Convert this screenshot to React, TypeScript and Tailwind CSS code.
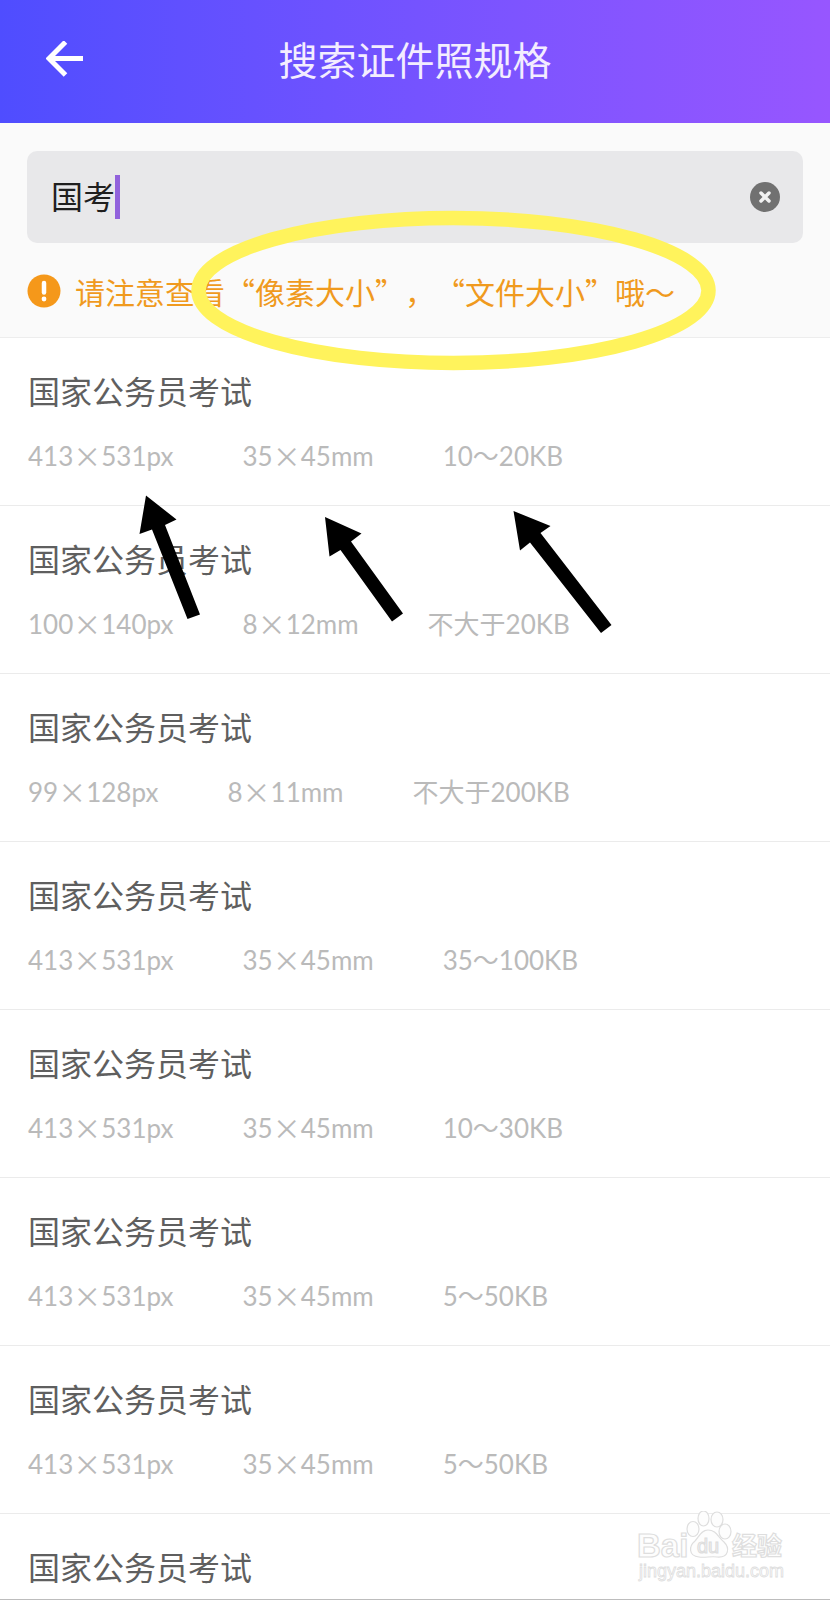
import React, { useState } from 'react';

interface PhotoSpec {
  id: number;
  name: string;
  pixels: [number, number];
  size: [number, number];
  fileSize: string;
}

const SPECS: PhotoSpec[] = [
  { id: 1, name: '国家公务员考试', pixels: [413, 531], size: [35, 45], fileSize: '10～20KB' },
  { id: 2, name: '国家公务员考试', pixels: [100, 140], size: [8, 12], fileSize: '不大于20KB' },
  { id: 3, name: '国家公务员考试', pixels: [99, 128], size: [8, 11], fileSize: '不大于200KB' },
  { id: 4, name: '国家公务员考试', pixels: [413, 531], size: [35, 45], fileSize: '35～100KB' },
  { id: 5, name: '国家公务员考试', pixels: [413, 531], size: [35, 45], fileSize: '10～30KB' },
  { id: 6, name: '国家公务员考试', pixels: [413, 531], size: [35, 45], fileSize: '5～50KB' },
  { id: 7, name: '国家公务员考试', pixels: [413, 531], size: [35, 45], fileSize: '5～50KB' },
  { id: 8, name: '国家公务员考试', pixels: [413, 531], size: [35, 45], fileSize: '5～50KB' },
];

const Dimensions: React.FC<{ value: [number, number]; unit: string }> = ({ value, unit }) => (
  <span className="flex items-center">
    {value[0]}
    <span className="font-['Noto_Sans_CJK_SC',sans-serif] text-[28px]">×</span>
    {value[1]}
    {unit}
  </span>
);

const SpecRow: React.FC<{ spec: PhotoSpec }> = ({ spec }) => (
  <li className="border-b border-[#ebebeb]">
    <a href="#" className="flex flex-col gap-5 px-7 pt-[30px] pb-[29px]">
      <h2 className="text-[32px] leading-[48px] text-[#5f5f5f]">{spec.name}</h2>
      <div className="flex gap-[69px] text-[26px] leading-10 whitespace-nowrap text-[#bababa]">
        <Dimensions value={spec.pixels} unit="px" />
        <Dimensions value={spec.size} unit="mm" />
        <span>{spec.fileSize}</span>
      </div>
    </a>
  </li>
);

// Hand-drawn highlights on top of the page
const Annotations: React.FC = () => (
  <svg className="pointer-events-none absolute top-0 left-0" width="830" height="660" viewBox="0 0 830 660" aria-hidden="true">
    <ellipse cx="453.5" cy="290.5" rx="255" ry="72.5" fill="none" stroke="#fff35c" strokeWidth="14.5" />
    <path d="M146 495.5L176.5 519.5L165 525L200 614.5L187.5 619L152 529.5L139.5 534Z" />
    <path d="M325 517L361.5 533.5L351 541.5L403 613.5L392 621.5L340.5 550L329.5 556.5Z" />
    <path d="M513.5 511L550.5 526L540.5 533L611.5 625L601 633L530 542.5L520 550.5Z" />
  </svg>
);

const Watermark: React.FC = () => (
  <svg
    className="pointer-events-none absolute right-9 bottom-2.5"
    width="160"
    height="78"
    viewBox="0 0 160 78"
    fill="#fdfdfd"
    stroke="#dedede"
    strokeWidth="1.2"
    fontFamily='"Liberation Sans", "Noto Sans CJK SC", sans-serif'
  >
    <text x="3" y="46" fontSize="33" fontWeight="bold">Bai</text>
    <ellipse cx="59" cy="18" rx="6" ry="7.5" />
    <ellipse cx="69.5" cy="7.5" rx="5.5" ry="7.5" />
    <ellipse cx="83" cy="8.5" rx="6" ry="7.5" />
    <ellipse cx="91" cy="20.5" rx="6" ry="7.5" />
    <path d="M74 19C67 19 65 26 61 30C55 35 54 45 65 46C71 47 77 45 83 46C95 47 96 37 90 31C84 26 82 19 74 19Z" />
    <text x="63" y="42" fontSize="20">du</text>
    <text x="98" y="44" fontSize="25" fontWeight="bold">经验</text>
    <text x="5" y="66" fontSize="18" strokeWidth="0.8">jingyan.baidu.com</text>
  </svg>
);

export default function App() {
  const [query, setQuery] = useState('国考');

  return (
    <div
      lang="zh-CN"
      className="relative flex h-screen flex-col overflow-hidden border-b border-[#bdbdbd] bg-white font-[Lato,'Noto_Sans_CJK_SC',sans-serif]"
    >
      <header className="grid shrink-0 grid-cols-[1fr_auto_1fr] items-center bg-linear-to-r from-[#4f4dff] to-[#9756ff] px-[46px] pt-8 pb-[35px]">
        <button type="button" aria-label="返回" className="justify-self-start">
          <svg width="38" height="38" viewBox="0 0 38 38" fill="none" stroke="#ffffff" strokeWidth="5">
            <path d="M37 17.5H4M19.5 1L3 17.5L19.5 34" />
          </svg>
        </button>
        <h1 className="text-[39px] leading-[56px] text-[#f3edff]">搜索证件照规格</h1>
      </header>

      <section className="shrink-0 border-b border-[#ededed] bg-[#fafafa] px-[27px] pt-7 pb-[22px]">
        <div className="flex h-[92px] items-center rounded-[10px] bg-[#e8e8ea] pr-[23px] pl-6">
          <input
            type="text"
            aria-label="搜索规格"
            value={query}
            onChange={(e) => setQuery(e.target.value)}
            className="field-sizing-content text-[32px] leading-[48px] text-[#1f1f1f] caret-transparent outline-none"
          />
          <span className="h-11 w-[5px] bg-[#9162dc]" />
          <button type="button" aria-label="清除" onClick={() => setQuery('')} className="ml-auto">
            <svg width="30" height="30" viewBox="0 0 30 30">
              <circle cx="15" cy="15" r="15" fill="#717171" />
              <path d="M11 11l8 8M19 11l-8 8" stroke="#f2f2f2" strokeWidth="3.5" strokeLinecap="round" />
            </svg>
          </button>
        </div>
        <p className="mt-6 flex items-center gap-3.5 text-[30px] leading-[48px] whitespace-nowrap text-[#f09a1e]">
          <svg width="34" height="34" viewBox="0 0 34 34" className="shrink-0">
            <circle cx="17" cy="17" r="16.5" fill="#f5981a" />
            <path d="M17 9v9.5" stroke="#ffffff" strokeWidth="4.5" strokeLinecap="round" />
            <circle cx="17" cy="25" r="2.4" fill="#ffffff" />
          </svg>
          <span className="font-['Noto_Sans_CJK_SC',sans-serif] [text-spacing-trim:space-all]">
            请注意查看“像素大小”，“文件大小”哦～
          </span>
        </p>
      </section>

      <ul>
        {SPECS.map((spec) => (
          <SpecRow key={spec.id} spec={spec} />
        ))}
      </ul>

      <Annotations />
      <Watermark />
    </div>
  );
}
